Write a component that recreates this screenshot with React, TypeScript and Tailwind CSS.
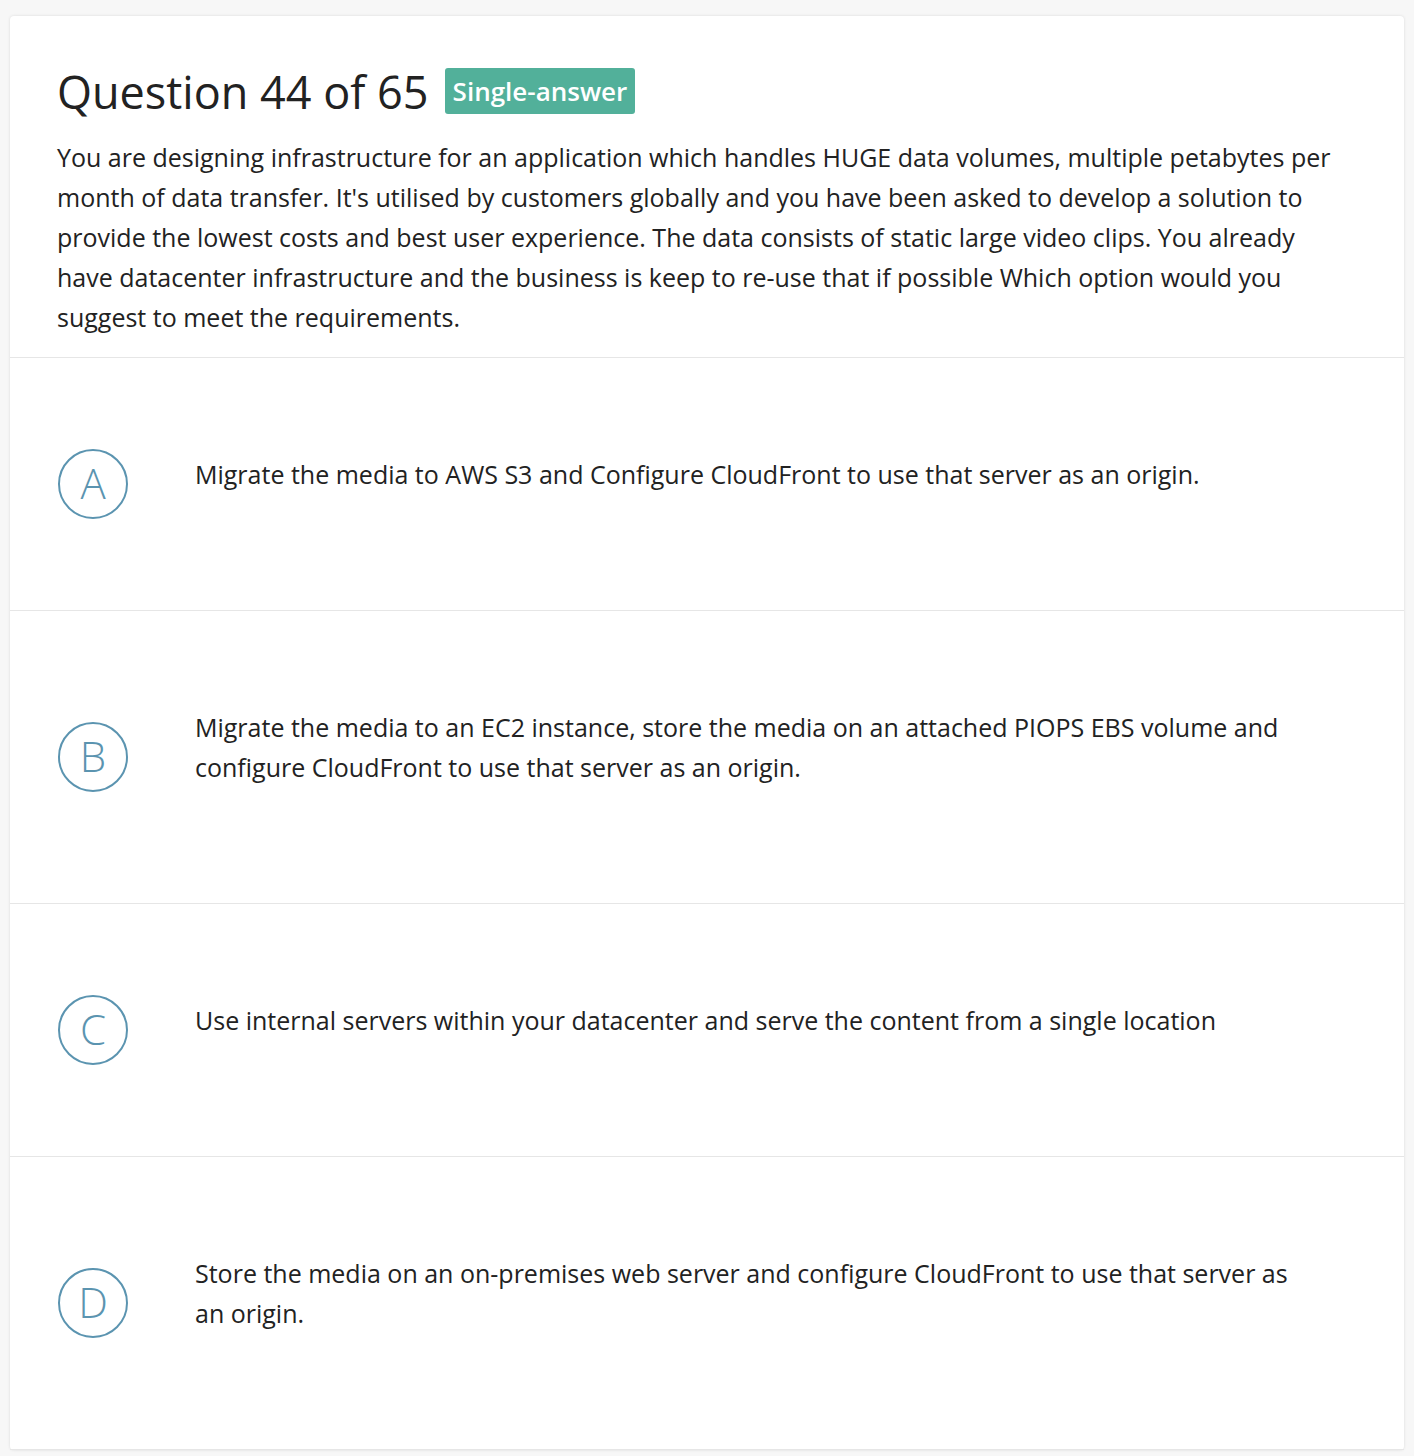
import React from "react";

const options = [
  { letter: "A", text: "Migrate the media to AWS S3 and Configure CloudFront to use that server as an origin." },
  { letter: "B", text: "Migrate the media to an EC2 instance, store the media on an attached PIOPS EBS volume and configure CloudFront to use that server as an origin." },
  { letter: "C", text: "Use internal servers within your datacenter and serve the content from a single location" },
  { letter: "D", text: "Store the media on an on-premises web server and configure CloudFront to use that server as an origin." },
];

export default function App() {
  return (
    <div className="min-h-screen bg-[#f7f7f7] px-[10px] pt-[16px] text-[#222]" style={{ fontFamily: "'Open Sans', Lato, sans-serif" }}>
      <div className="rounded-[4px] bg-white shadow-[0_0_3px_rgba(0,0,0,0.12)]">
        <div className="border-b border-[#e6e6e6] px-[47px] pt-[52px] pb-[20px]">
          <div className="flex h-[46px] items-center gap-[16px]">
            <h1 className="text-[45px] font-normal leading-none text-[#222]">Question 44 of 65</h1>
            <span className="flex h-[46px] items-center rounded-[3px] bg-[#52b09a] px-[8px] text-[26px] font-semibold text-white">
              Single-answer
            </span>
          </div>
          <p className="mt-[23px] pr-[10px] text-[25px] leading-[40px] text-[#222]">
            You are designing infrastructure for an application which handles HUGE data volumes, multiple petabytes per month of data transfer. It's utilised by customers globally and you have been asked to develop a solution to provide the lowest costs and best user experience. The data consists of static large video clips. You already have datacenter infrastructure and the business is keep to re-use that if possible Which option would you suggest to meet the requirements.
          </p>
        </div>
        {options.map((o) => (
          <div key={o.letter} className="flex items-center border-b border-[#e6e6e6] px-[48px] py-[91px]">
            <div className="flex h-[70px] w-[70px] shrink-0 items-center justify-center rounded-full border-2 border-[#5b94b0] pb-[2px] text-[42px] font-light leading-none text-[#5b94b0]">
              {o.letter}
            </div>
            <div className="ml-[67px] pt-[5px] pb-[25px] pr-[60px]">
              <p className="text-[25px] leading-[40px] text-[#222]">{o.text}</p>
            </div>
          </div>
        ))}
      </div>
    </div>
  );
}
